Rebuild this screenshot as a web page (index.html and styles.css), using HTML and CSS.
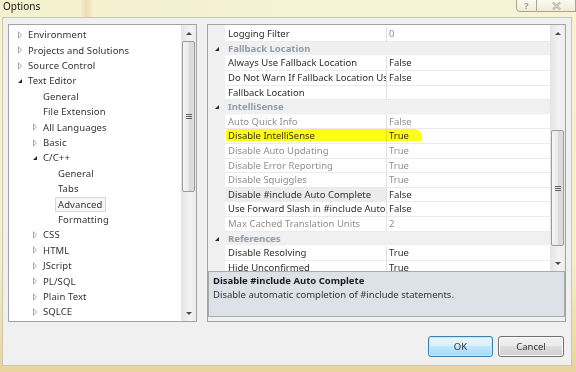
FILE: index.html
```html
<!DOCTYPE html>
<html lang="en">
<head>
  <meta charset="UTF-8">
  <title>Options</title>
  <link rel="stylesheet" href="styles.css">
</head>
<body>
  <div class="window">
    <div class="titlebar">
      <span class="title">Options</span>
      <div class="caption-btns">
        <span class="cap-btn help">?</span>
        <span class="cap-btn close">
          <svg width="9" height="8" viewBox="0 0 9 8"><path d="M1 0.5 L8 7.5 M8 0.5 L1 7.5" stroke="#a9a9a0" stroke-width="2.2" fill="none"/><path d="M1 0.5 L8 7.5 M8 0.5 L1 7.5" stroke="#f4f2e2" stroke-width="0.8" fill="none"/></svg>
        </span>
      </div>
    </div>

    <div class="client">
      <div class="main">
        <!-- category tree -->
        <div class="tree">
          <ul class="tree-list">
            <li class="node lv0"><span class="arrow closed"></span>Environment</li>
            <li class="node lv0"><span class="arrow closed"></span>Projects and Solutions</li>
            <li class="node lv0"><span class="arrow closed"></span>Source Control</li>
            <li class="node lv0"><span class="arrow open"></span>Text Editor</li>
            <li class="node lv1"><span class="arrow"></span>General</li>
            <li class="node lv1"><span class="arrow"></span>File Extension</li>
            <li class="node lv1"><span class="arrow closed"></span>All Languages</li>
            <li class="node lv1"><span class="arrow closed"></span>Basic</li>
            <li class="node lv1"><span class="arrow open"></span>C/C++</li>
            <li class="node lv2"><span class="arrow"></span>General</li>
            <li class="node lv2"><span class="arrow"></span>Tabs</li>
            <li class="node lv2"><span class="arrow"></span><span class="selected">Advanced</span></li>
            <li class="node lv2"><span class="arrow"></span>Formatting</li>
            <li class="node lv1"><span class="arrow closed"></span>CSS</li>
            <li class="node lv1"><span class="arrow closed"></span>HTML</li>
            <li class="node lv1"><span class="arrow closed"></span>JScript</li>
            <li class="node lv1"><span class="arrow closed"></span>PL/SQL</li>
            <li class="node lv1"><span class="arrow closed"></span>Plain Text</li>
            <li class="node lv1"><span class="arrow closed"></span>SQLCE</li>
          </ul>
          <div class="scrollbar tree-scroll">
            <span class="sb-btn"><span class="tri up"></span></span>
            <span class="thumb"><span class="grip"></span></span>
            <span class="sb-btn end"><span class="tri down"></span></span>
          </div>
        </div>

        <!-- property grid -->
        <div class="panel">
          <div class="grid">
            <div class="rows">
              <div class="row"><span class="mg"></span><span class="name">Logging Filter</span><span class="val dim">0</span></div>
              <div class="row cat"><span class="mg"><span class="exp"></span></span><span class="cat-name">Fallback Location</span></div>
              <div class="row"><span class="mg"></span><span class="name">Always Use Fallback Location</span><span class="val">False</span></div>
              <div class="row"><span class="mg"></span><span class="name">Do Not Warn If Fallback Location Used</span><span class="val">False</span></div>
              <div class="row"><span class="mg"></span><span class="name">Fallback Location</span><span class="val"></span></div>
              <div class="row cat"><span class="mg"><span class="exp"></span></span><span class="cat-name">IntelliSense</span></div>
              <div class="row"><span class="mg"></span><span class="name dim">Auto Quick Info</span><span class="val dim">False</span></div>
              <div class="row"><span class="mg"></span><span class="name">Disable IntelliSense</span><span class="val">True</span><span class="marker"></span></div>
              <div class="row"><span class="mg"></span><span class="name dim">Disable Auto Updating</span><span class="val dim">True</span></div>
              <div class="row"><span class="mg"></span><span class="name dim">Disable Error Reporting</span><span class="val dim">True</span></div>
              <div class="row"><span class="mg"></span><span class="name dim">Disable Squiggles</span><span class="val dim">True</span></div>
              <div class="row"><span class="mg"></span><span class="name current">Disable #include Auto Complete</span><span class="val">False</span></div>
              <div class="row"><span class="mg"></span><span class="name">Use Forward Slash in #include Auto Complete</span><span class="val">False</span></div>
              <div class="row"><span class="mg"></span><span class="name dim">Max Cached Translation Units</span><span class="val dim">2</span></div>
              <div class="row cat"><span class="mg"><span class="exp"></span></span><span class="cat-name">References</span></div>
              <div class="row"><span class="mg"></span><span class="name">Disable Resolving</span><span class="val">True</span></div>
              <div class="row"><span class="mg"></span><span class="name">Hide Unconfirmed</span><span class="val">True</span></div>
            </div>
            <div class="scrollbar grid-scroll">
              <span class="sb-btn"><span class="tri up"></span></span>
              <span class="thumb"><span class="grip"></span></span>
              <span class="sb-btn end"><span class="tri down"></span></span>
            </div>
          </div>
          <div class="desc">
            <div class="desc-title">Disable #include Auto Complete</div>
            <div class="desc-text">Disable automatic completion of #include statements.</div>
          </div>
        </div>
      </div>

      <div class="footer">
        <button class="btn default">OK</button>
        <button class="btn">Cancel</button>
      </div>
    </div>
  </div>
</body>
</html>
```

FILE: styles.css
```css
* {
  box-sizing: border-box;
}
body {
  margin: 0;
  width: 576px;
  height: 372px;
  overflow: hidden;
  font-family: "Noto Sans", sans-serif;
  font-size: 9.5px;
  color: #333;
  background: linear-gradient(to bottom, #f6f3d2 0, #f4f0c9 70%, #e9d49c 100%);
}
.window {
  padding: 0 4px 0 2px;
}
.titlebar {
  height: 17px;
  display: flex;
  justify-content: space-between;
  align-items: flex-start;
  background: linear-gradient(to right, #f5f1cf 0, #f5f1cf 80px, #efdcb6 86px, #f5f1cf 94px, #f7f4d6 100%);
  margin: 0 -4px 0 -2px;
  padding-left: 3px;
}
.title {
  font-size: 10px;
  line-height: 13px;
  color: #151515;
}
.caption-btns {
  display: flex;
  margin-top: -1px;
}
.cap-btn {
  height: 13px;
  border: 1px solid #a7a594;
  background: linear-gradient(to bottom, #fbfaee, #eeecd8);
  display: flex;
  align-items: center;
  justify-content: center;
}
.help {
  width: 21px;
  border-radius: 0 0 0 4px;
  font-weight: bold;
  font-size: 9px;
  color: #a0a098;
}
.close {
  width: 39px;
  border-left: none;
}

.client {
  height: 349px;
  border: 1px solid #c9c7b4;
  background: #f0f0f0;
  padding: 6px 5px 0 5px;
}
.main {
  display: flex;
  gap: 10px;
  height: 298px;
}

/* tree */
.tree {
  width: 189px;
  border: 1px solid #a3a3a3;
  background: #fff;
  display: flex;
}
.tree-list {
  list-style: none;
  margin: 0;
  padding: 2.3px 0 0 0;
  flex: 1;
}
.node {
  height: 15.4px;
  line-height: 15.4px;
  display: flex;
  align-items: center;
  white-space: nowrap;
  color: #333;
  letter-spacing: 0.1px;
}
.lv0 { padding-left: 8px; }
.lv1 { padding-left: 23px; }
.lv2 { padding-left: 38px; }
.arrow {
  width: 11px;
  flex: none;
  height: 8px;
  position: relative;
}
.arrow.closed::before {
  content: "";
  position: absolute;
  left: 1px;
  top: 0;
  width: 0;
  height: 0;
  border-top: 4px solid transparent;
  border-bottom: 4px solid transparent;
  border-left: 4px solid #a8a8a8;
}
.arrow.closed::after {
  content: "";
  position: absolute;
  left: 2px;
  top: 2px;
  width: 0;
  height: 0;
  border-top: 2px solid transparent;
  border-bottom: 2px solid transparent;
  border-left: 2px solid #fff;
}
.arrow.open::before {
  content: "";
  position: absolute;
  left: 1px;
  top: 2px;
  width: 0;
  height: 0;
  border-left: 4px solid transparent;
  border-bottom: 4px solid #2a2a2a;
}
.selected {
  margin-left: -3px;
  padding: 0 2px;
  border: 1px solid #d8d8d8;
  background: #f7f7f7;
  line-height: 13px;
}

/* scrollbars */
.scrollbar {
  width: 15px;
  flex: none;
  display: flex;
  flex-direction: column;
  align-items: center;
  background: linear-gradient(to right, #e4e4e4, #f3f3f3 60%, #ececec);
}
.sb-btn {
  height: 16px;
  width: 100%;
  display: flex;
  align-items: center;
  justify-content: center;
}
.sb-btn.end {
  margin-top: auto;
}
.tri {
  width: 0;
  height: 0;
  border-left: 3px solid transparent;
  border-right: 3px solid transparent;
}
.tri.up { border-bottom: 3px solid #4b4b4b; }
.tri.down { border-top: 3px solid #4b4b4b; }
.thumb {
  width: 13px;
  border: 1px solid #9b9b9b;
  border-radius: 2px;
  background: linear-gradient(to right, #f6f6f6, #e9e9e9 50%, #d9d9d9 52%, #dedede);
  display: flex;
  align-items: center;
  justify-content: center;
}
.grip {
  width: 6px;
  height: 5px;
  background: repeating-linear-gradient(to bottom, #5e5e5e 0 1px, transparent 1px 2px);
}
.tree-scroll .thumb {
  margin-top: 0;
  height: 151px;
}
.grid-scroll .thumb {
  margin-top: 89px;
  height: 116px;
}

/* property grid */
.panel {
  flex: 1;
  border: 1px solid #a3a3a3;
  display: flex;
  flex-direction: column;
  padding-bottom: 3px;
}
.grid {
  height: 246px;
  display: flex;
  overflow: hidden;
  background: #fff;
}
.rows {
  flex: 1;
  padding-top: 2.3px;
  background: linear-gradient(to right, #f0f0f0 17px, #fff 17px);
  overflow: hidden;
}
.row {
  height: 14.6px;
  display: flex;
  position: relative;
  line-height: 13.6px;
}
.mg {
  width: 17px;
  flex: none;
  position: relative;
}
.name {
  width: 162px;
  flex: none;
  padding-left: 3px;
  border-right: 1px solid #e2e2e2;
  border-bottom: 1px solid #ebebeb;
  white-space: nowrap;
  overflow: hidden;
  color: #2e2e2e;
}
.val {
  flex: 1;
  padding-left: 2px;
  border-bottom: 1px solid #ebebeb;
  color: #2e2e2e;
}
.dim {
  color: #8f8f8f;
}
.current {
  background: #ececec;
}
.cat {
  background: #f0f0f0;
}
.cat-name {
  flex: 1;
  padding-left: 3px;
  font-weight: bold;
  color: #929cab;
  border-bottom: 1px solid #fafafa;
}
.exp {
  position: absolute;
  left: 7px;
  top: 5px;
  width: 0;
  height: 0;
  border-left: 4px solid transparent;
  border-bottom: 4px solid #262626;
}
.marker {
  position: absolute;
  left: 18px;
  top: 0;
  width: 196px;
  height: 12px;
  background: #ffff14;
  border-radius: 3px 8px 2px 1px;
  mix-blend-mode: multiply;
}

.desc {
  height: 46px;
  border: 1px solid #a9a9a9;
  background: #dde1e8;
  padding: 2px 0 0 4px;
  line-height: 14px;
}
.desc-title {
  font-weight: bold;
  color: #1c1c1c;
}
.desc-text {
  color: #333;
}

/* buttons */
.footer {
  display: flex;
  justify-content: flex-end;
  gap: 5px;
  margin-top: 14px;
  padding-right: 2px;
}
.btn {
  width: 66px;
  height: 21px;
  font-family: "Noto Sans", sans-serif;
  font-size: 9.5px;
  color: #333;
  border: 1px solid #707070;
  border-radius: 3px;
  background: linear-gradient(to bottom, #f2f2f2 0, #ebebeb 45%, #dddddd 50%, #cfcfcf 100%);
  box-shadow: inset 0 0 0 1px #fbfbfb;
  padding: 0;
}
.btn.default {
  width: 65px;
  border-color: #3c7fb1;
  background: linear-gradient(to bottom, #eaf6fd 0, #d9f0fc 45%, #bee6fd 50%, #a7d9f5 100%);
  box-shadow: inset 0 0 0 1px #c6e8fb;
}
```
